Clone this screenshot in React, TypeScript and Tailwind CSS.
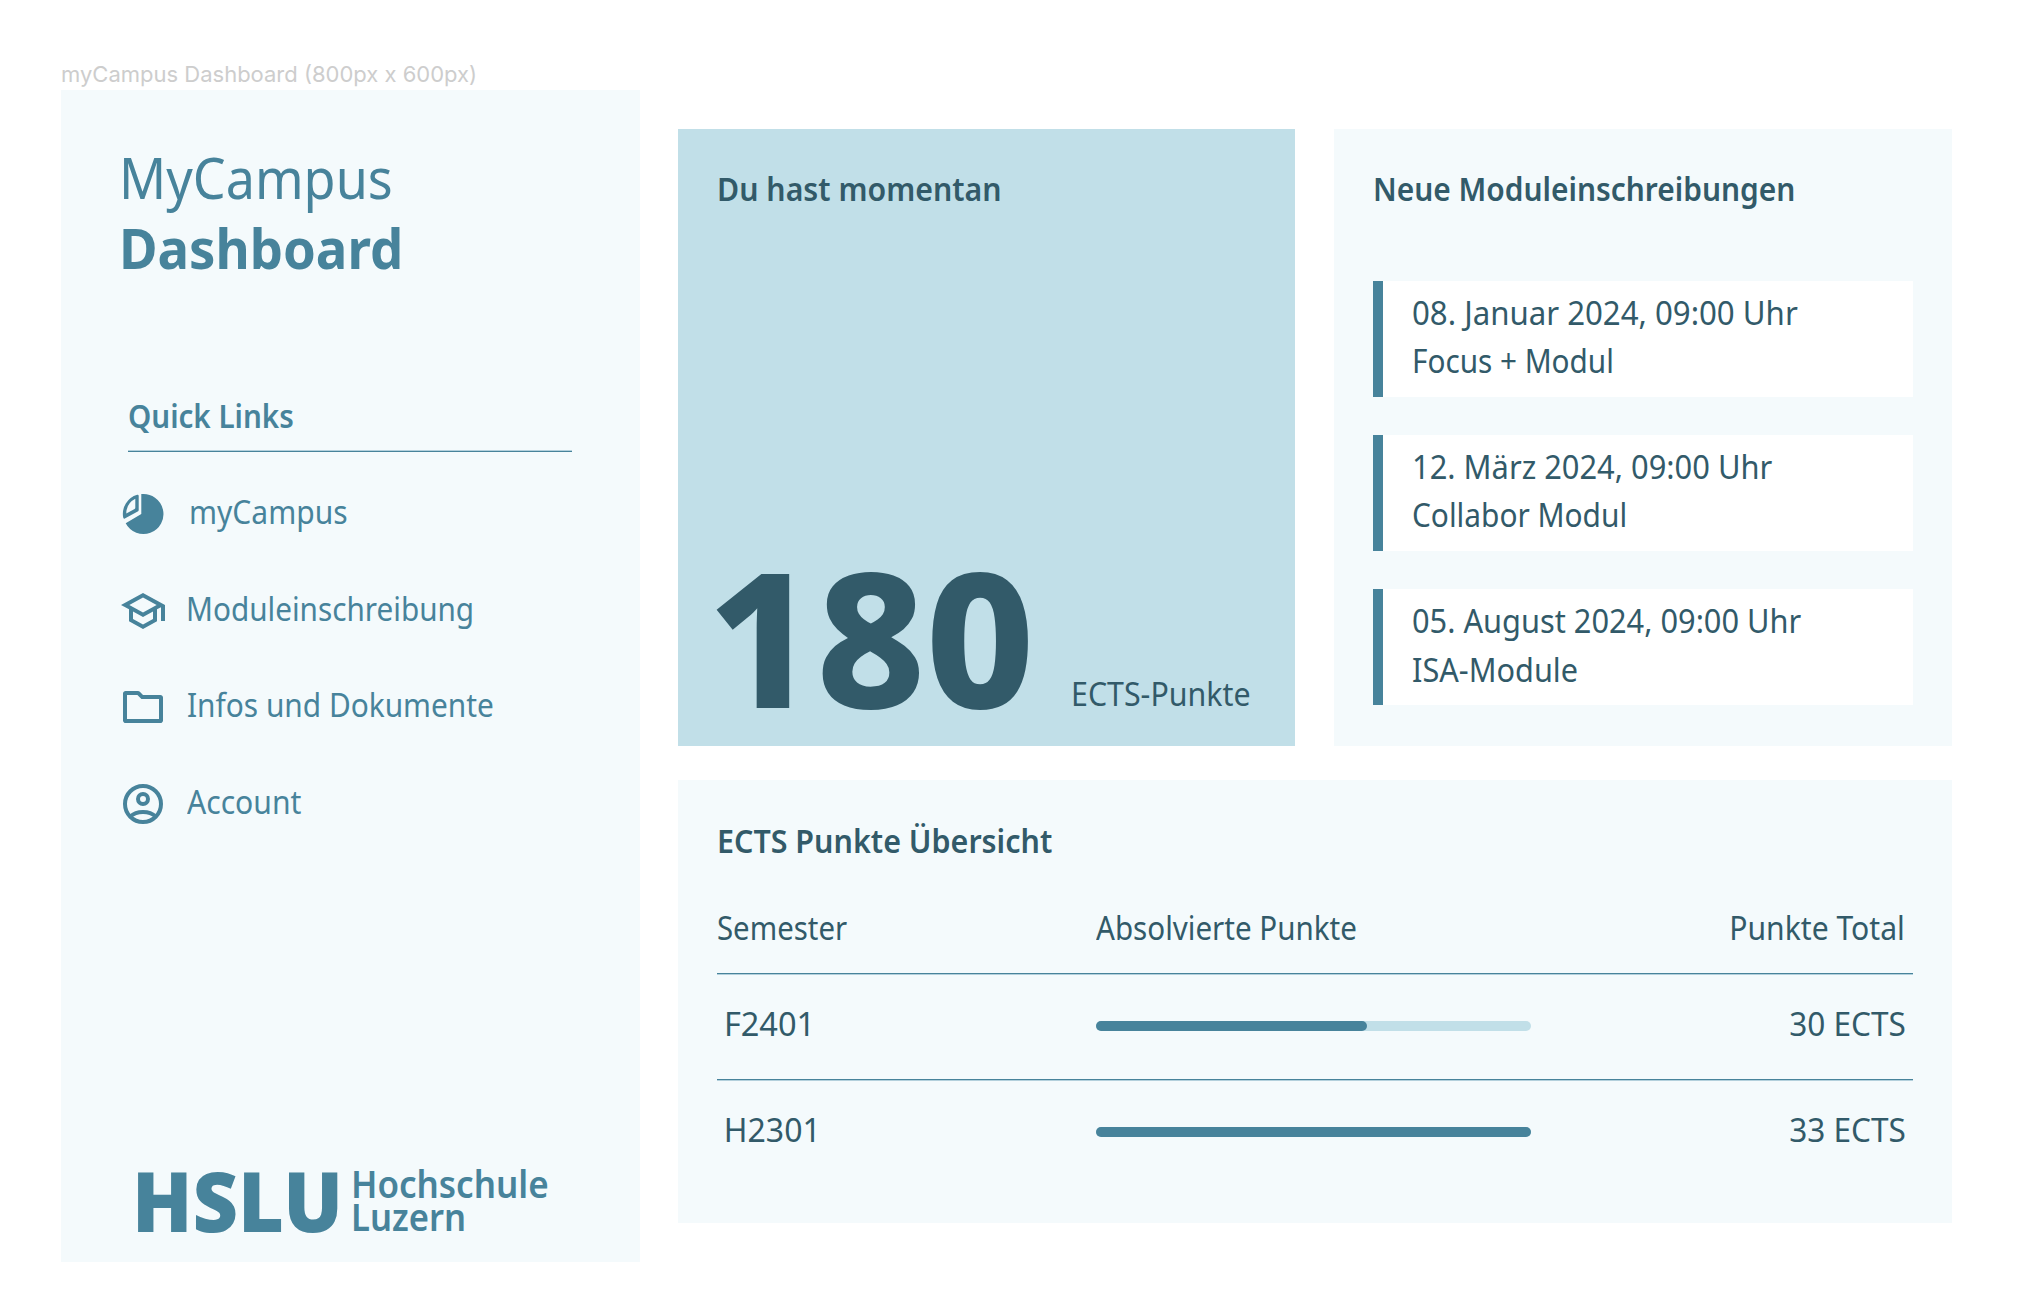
import type { ReactNode } from "react";

function PieIcon() {
  return (
    <svg viewBox="0 0 48 48" className="size-12 shrink-0" fill="currentColor">
      <path d="M22.3 4.1A20 20 0 1 1 6.7 33.2L22.3 24Z" />
      <path
        fillRule="evenodd"
        d="M18.2 4.8Q19.7 4.5 19.7 6V19.9Q19.7 21 18.7 21.5L5.8 28.5Q4.5 29.2 4.2 27.6A20 20 0 0 1 18.2 4.8ZM16.3 8.8A16.5 16.5 0 0 0 7.3 23.4L15.6 18.9Q16.3 18.5 16.3 17.7Z"
      />
    </svg>
  );
}

function SchoolIcon() {
  return (
    <svg viewBox="0 0 24 24" className="size-12 shrink-0" fill="currentColor">
      <path d="M12 3 1 9l4 2.18v6L12 21l7-3.82v-6l2-1.09V17h2V9L12 3zm6.82 6L12 12.72 5.18 9 12 5.28 18.82 9zM17 15.99l-5 2.73-5-2.73v-3.72L12 15l5-2.73v3.72z" />
    </svg>
  );
}

function FolderIcon() {
  return (
    <svg viewBox="0 0 24 24" className="size-12 shrink-0" fill="currentColor">
      <path
        fillRule="evenodd"
        d="M3.3 4h6.2c.35 0 .68.14.93.4L12 6h8.7c.72 0 1.3.58 1.3 1.3v11.4c0 .72-.58 1.3-1.3 1.3H3.3C2.58 20 2 19.42 2 18.7V5.3C2 4.58 2.58 4 3.3 4zM4 6v12h16V8h-8.8l-2-2H4z"
      />
    </svg>
  );
}

function AccountIcon() {
  return (
    <svg viewBox="0 0 24 24" className="size-12 shrink-0" fill="none" stroke="currentColor" strokeWidth="2">
      <circle cx="12" cy="12" r="9" />
      <circle cx="12" cy="9.5" r="2.5" />
      <path d="M5.6 18.3C7.2 16.8 9.4 16 12 16s4.8.8 6.4 2.3" />
    </svg>
  );
}

const links: { icon: ReactNode; label: string; cls: string }[] = [
  { icon: <PieIcon />, label: "myCampus", cls: "ml-[22px] scale-x-[0.909]" },
  { icon: <SchoolIcon />, label: "Moduleinschreibung", cls: "ml-[19px] scale-x-[0.900]" },
  { icon: <FolderIcon />, label: "Infos und Dokumente", cls: "ml-[20px] scale-x-[0.904]" },
  { icon: <AccountIcon />, label: "Account", cls: "ml-[20px] scale-x-[0.912]" },
];

const events = [
  { date: "08. Januar 2024, 09:00 Uhr", dateCls: "scale-x-[0.945]", name: "Focus + Modul", nameCls: "scale-x-[0.90]" },
  { date: "12. März 2024, 09:00 Uhr", dateCls: "scale-x-[0.935]", name: "Collabor Modul", nameCls: "scale-x-[0.904]" },
  { date: "05. August 2024, 09:00 Uhr", dateCls: "scale-x-[0.932]", name: "ISA-Module", nameCls: "scale-x-[0.929]" },
];

const semesters = [
  { name: "F2401", nameCls: "scale-x-[0.985]", percent: 62.2, total: "30 ECTS" },
  { name: "H2301", nameCls: "scale-x-[0.97]", percent: 100, total: "33 ECTS" },
];

function Divider() {
  return (
    <div>
      <div className="h-px bg-[#47839b]" />
      <div className="h-px bg-[#b3d0dc]" />
    </div>
  );
}

function Sidebar() {
  return (
    <aside className="flex h-[1172px] w-[579px] flex-col bg-[#f4fafc] pt-[53px] pl-[57px] text-[#47839b]">
      <h1 className="ml-px text-[56px] leading-[69.5px] whitespace-nowrap">
        <span className="block origin-left scale-x-[0.93] font-normal">MyCampus</span>
        <span className="block origin-left scale-x-[0.94] font-bold">Dashboard</span>
      </h1>
      <div className="mt-[110px] ml-[10px] w-[444px]">
        <h2 className="origin-left scale-x-[0.896] font-semibold">Quick Links</h2>
        <div className="mt-[10px] h-px bg-[#b3d0dc]" />
        <div className="h-px bg-[#47839b]" />
      </div>
      <nav className="mt-[14px] flex flex-col">
        {links.map((l) => (
          <a key={l.label} className="flex h-[96.5px] items-center">
            <span className="ml-px">{l.icon}</span>
            <span className={`mb-1 origin-left whitespace-nowrap ${l.cls}`}>{l.label}</span>
          </a>
        ))}
      </nav>
      <div className="mt-auto mb-5 ml-[14px] flex items-end">
        <span className="w-[219px] origin-left scale-x-[0.940] text-[84px] leading-[84px] font-black">HSLU</span>
        <span className="mb-[9px] text-[37px] leading-[32.3px] font-semibold">
          <span className="block origin-left scale-x-[0.945]">Hochschule</span>
          <span className="block origin-left scale-x-[0.935]">Luzern</span>
        </span>
      </div>
    </aside>
  );
}

function CreditsCard() {
  return (
    <section className="flex h-[617px] w-[617px] flex-col bg-[#c1dfe8] pt-[36px] pb-[17px] pl-[39px]">
      <h2 className="origin-left scale-x-[0.917] font-semibold">Du hast momentan</h2>
      <div className="mt-auto flex items-end whitespace-nowrap">
        <span className="-ml-[10.5px] w-[364px] origin-left scale-x-[1.005] text-[188px] leading-[188px] font-extrabold">180</span>
        <span className="mb-[11.5px] origin-left scale-x-[0.92]">ECTS-Punkte</span>
      </div>
    </section>
  );
}

function EventsCard() {
  return (
    <section className="h-[617px] w-[618px] bg-[#f4fafc] px-[39px] pt-[36px]">
      <h2 className="origin-left scale-x-[0.906] font-semibold whitespace-nowrap">Neue Moduleinschreibungen</h2>
      <ul className="mt-[67.6px] flex flex-col gap-[38.4px]">
        {events.map((e) => (
          <li
            key={e.name}
            className="h-[116px] border-l-[10px] border-[#47839b] bg-white pt-[8px] pl-[28.5px] leading-[48.4px] whitespace-nowrap"
          >
            <p className={`origin-left ${e.dateCls}`}>{e.date}</p>
            <p className={`origin-left ${e.nameCls}`}>{e.name}</p>
          </li>
        ))}
      </ul>
    </section>
  );
}

function OverviewCard() {
  return (
    <section className="mt-[34px] h-[443px] bg-[#f4fafc] pt-[36.5px] pr-[39px] pl-[39px]">
      <h2 className="origin-left scale-x-[0.922] font-semibold">ECTS Punkte Übersicht</h2>
      <div className="mt-[39px] grid h-[69.5px] grid-cols-[379px_435px_1fr]">
        <span className="origin-left scale-x-[0.89]">Semester</span>
        <span className="origin-left scale-x-[0.896]">Absolvierte Punkte</span>
        <span className="origin-right scale-x-[0.912] pr-[9px] text-right">Punkte Total</span>
      </div>
      {semesters.map((s) => (
        <div key={s.name}>
          <Divider />
          <div className="grid h-[104px] grid-cols-[379px_435px_1fr] pt-[25px]">
            <span className={`origin-left pl-[7px] ${s.nameCls}`}>{s.name}</span>
            <div className="mt-[21px] h-[10px] rounded-full bg-[#c1dfe8]">
              <div className="h-full rounded-full bg-[#47839b]" style={{ width: `${s.percent}%` }} />
            </div>
            <span className="origin-right scale-x-[0.956] pr-[7.5px] text-right">{s.total}</span>
          </div>
        </div>
      ))}
    </section>
  );
}

export default function App() {
  return (
    <div className="flex h-[1308px] w-[2022px] overflow-hidden bg-white pl-[61px] font-['Noto_Sans',sans-serif] text-[33px] leading-[48px] text-[#325a69]">
      <div className="flex w-[579px] flex-col">
        <div className="flex h-[90px] items-end pb-px font-['Inter',sans-serif] text-[22px] leading-[30px] whitespace-nowrap text-[#cdcdcd]">
          myCampus Dashboard (800px x 600px)
        </div>
        <Sidebar />
      </div>
      <main className="mt-[129px] ml-[38px] w-[1274px]">
        <div className="flex justify-between">
          <CreditsCard />
          <EventsCard />
        </div>
        <OverviewCard />
      </main>
    </div>
  );
}
